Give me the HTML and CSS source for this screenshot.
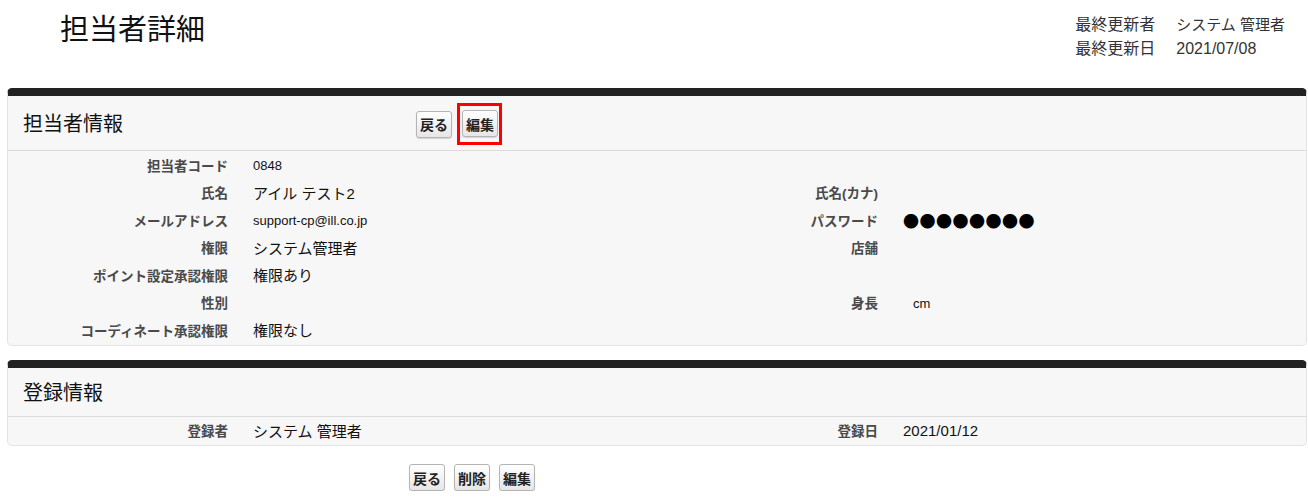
FILE: index.html
```html
<!DOCTYPE html>
<html lang="ja">
    <head>
        <meta charset="UTF-8">
        <title>担当者詳細</title>
        <link rel="stylesheet" href="styles.css">
    </head>

    <body>
        <div class="page">
            <div class="top">
                <h1 class="title">担当者詳細</h1>
                <dl class="meta">
                    <dt>最終更新者</dt>
                    <dd>システム 管理者</dd>
                    <dt>最終更新日</dt>
                    <dd class="num">2021/07/08</dd>
                </dl>
            </div>

            <div class="panel">
                <div class="panel-head">
                    <h2>担当者情報</h2>
                    <div class="actions">
                        <button class="btn">戻る</button>
                        <span class="mark"><button class="btn">編集</button></span>
                    </div>
                </div>
                <div class="fields">
                    <div class="label">担当者コード</div>
                    <div class="value small">0848</div>
                    <div class="label"></div>
                    <div class="value"></div>

                    <div class="label">氏名</div>
                    <div class="value">アイル テスト2</div>
                    <div class="label">氏名(カナ)</div>
                    <div class="value"></div>

                    <div class="label">メールアドレス</div>
                    <div class="value small">support-cp@ill.co.jp</div>
                    <div class="label">パスワード</div>
                    <div class="value dots">●●●●●●●●</div>

                    <div class="label">権限</div>
                    <div class="value">システム管理者</div>
                    <div class="label">店舗</div>
                    <div class="value"></div>

                    <div class="label">ポイント設定承認権限</div>
                    <div class="value">権限あり</div>
                    <div class="label"></div>
                    <div class="value"></div>

                    <div class="label">性別</div>
                    <div class="value"></div>
                    <div class="label">身長</div>
                    <div class="value small unit">cm</div>

                    <div class="label">コーディネート承認権限</div>
                    <div class="value">権限なし</div>
                    <div class="label"></div>
                    <div class="value"></div>
                </div>
            </div>

            <div class="panel">
                <div class="panel-head">
                    <h2>登録情報</h2>
                </div>
                <div class="fields">
                    <div class="label">登録者</div>
                    <div class="value">システム 管理者</div>
                    <div class="label">登録日</div>
                    <div class="value num">2021/01/12</div>
                </div>
            </div>

            <div class="footer">
                <button class="btn">戻る</button>
                <button class="btn">削除</button>
                <button class="btn">編集</button>
            </div>
        </div>
    </body>
</html>
```

FILE: styles.css
```css
body {
    margin: 0;
    font-family: "Liberation Sans", "Noto Sans CJK JP", sans-serif;
    color: #222;
    background-color: #fff;
}
.page {
    width: 1300px;
    padding-left: 7px;
}
.top {
    display: flex;
    justify-content: space-between;
    align-items: flex-start;
    height: 88px;
    padding-top: 12px;
    box-sizing: border-box;
}
.title {
    margin: 0;
    padding-left: 53px;
    font-size: 29px;
    line-height: 36px;
    font-weight: normal;
    color: #111;
}
.meta {
    display: grid;
    grid-template-columns: auto auto;
    column-gap: 21px;
    margin: 1px 22px 0 0;
    font-size: 15px;
    line-height: 24px;
    color: #333;
}
.meta dt {
    font-size: 16px;
}
.meta dd {
    margin: 0;
}
.num {
    font-size: 16.5px;
}
.meta .num {
    font-size: 16px;
}
.panel {
    background-color: #f7f7f7;
    border: 1px solid #e3e3e3;
    border-top: 8px solid #222;
    border-radius: 5px;
    margin-bottom: 14px;
}
.panel-head {
    display: flex;
    align-items: center;
    min-height: 49px;
    padding: 7px 15px 5px;
    box-sizing: border-box;
    border-bottom: 1px solid #dcdcdc;
}
.panel-head h2 {
    flex: 0 0 393px;
    margin: 0;
    font-size: 20px;
    line-height: 24px;
    font-weight: normal;
    color: #111;
}
.actions {
    display: flex;
    align-items: center;
    gap: 5px;
}
.mark {
    display: inline-flex;
    border: 3px solid #f00;
    padding: 4px 1px 5px 2px;
}
.btn {
    height: 27px;
    padding: 0 3px;
    font-family: inherit;
    font-size: 14px;
    font-weight: bold;
    color: #222;
    background: linear-gradient(#fff, #e6e6e6);
    border: 1px solid #b4b4b4;
    border-radius: 3px;
    box-shadow: 0 1px 1px rgba(0, 0, 0, 0.15);
    cursor: pointer;
}
.fields {
    display: grid;
    grid-template-columns: 220px 375px 225px 1fr;
    column-gap: 25px;
    grid-auto-rows: 27.5px;
    align-items: center;
    padding-bottom: 1px;
}
.label {
    text-align: right;
    font-size: 13.5px;
    font-weight: bold;
    color: #4a4a4a;
}
.value {
    font-size: 15px;
    color: #111;
}
.value.small {
    font-size: 13px;
    padding-top: 2px;
}
.unit {
    padding-left: 10px;
    padding-top: 5px;
}
.dots {
    font-family: "Noto Sans CJK JP", sans-serif;
    font-size: 16px;
    letter-spacing: 0.5px;
    color: #000;
}
.footer {
    display: flex;
    gap: 9px;
    padding: 4px 0 0 402px;
}
```
